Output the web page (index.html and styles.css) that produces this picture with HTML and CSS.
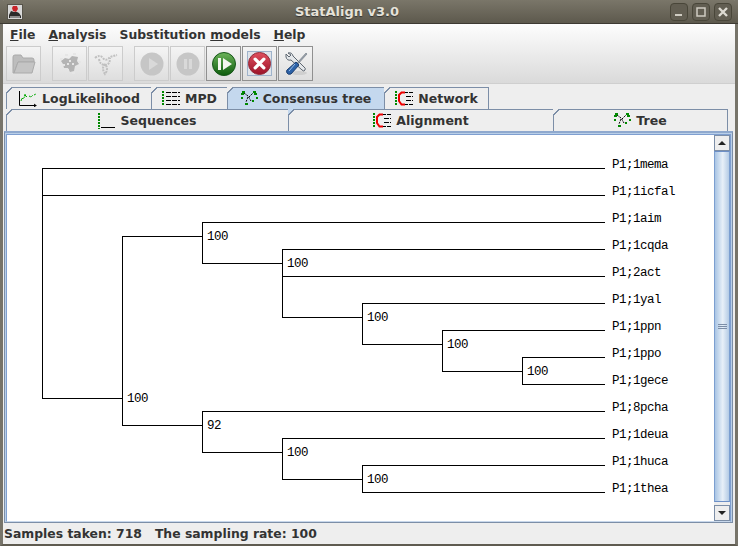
FILE: index.html
```html
<!DOCTYPE html>
<html lang="en">
<head>
<meta charset="utf-8">
<title>StatAlign v3.0</title>
<link rel="stylesheet" href="styles.css">
</head>
<body>
<div class="window">
  <header class="titlebar">
    <svg class="app-icon" width="16" height="16" viewBox="0 0 16 16">
      <rect x="0.500" y="0.500" width="15" height="15" fill="#d8d8d8" stroke="#57544a"/>
      <path d="M2 11l2-4 3 1 3 0 2 1 2 3v2H2z" fill="#2c2c2c"/>
      <path d="M6 2h4l1 3-2 3-3-1-1-3z" fill="#c8242a"/>
      <path d="M3 13h10" stroke="#eee"/>
    </svg>
    <span class="title">StatAlign v3.0</span>
    <div class="win-buttons">
      <span class="win-btn"><svg width="14" height="14" viewBox="0 0 14 14"><rect x="3" y="9" width="7" height="2" fill="#cfccc2"/></svg></span>
      <span class="win-btn"><svg width="14" height="14" viewBox="0 0 14 14"><rect x="3" y="3" width="8" height="8" fill="none" stroke="#cfccc2" stroke-width="1.500"/></svg></span>
      <span class="win-btn"><svg width="14" height="14" viewBox="0 0 14 14"><path d="M3 3l8 8M11 3l-8 8" stroke="#dedbd2" stroke-width="2.400"/></svg></span>
    </div>
  </header>
  <div class="chrome">
    <nav class="menubar">
      <span class="menu"><u>F</u>ile</span>
      <span class="menu"><u>A</u>nalysis</span>
      <span class="menu">Substitution <u>m</u>odels</span>
      <span class="menu"><u>H</u>elp</span>
    </nav>
    <div class="toolbar">
      <span class="tool disabled"><svg width="24" height="20" viewBox="0 0 24 20"><path d="M1 3q0-2 2-2h6l2 3h9q2 0 2 2v2H6L2 19H1z" fill="#bdbdbd" stroke="#aaa"/><path d="M6 8h17l-3 11H2z" fill="#c4c4c4" stroke="#aaa"/></svg></span>
      <span class="tool-gap"></span>
      <span class="tool disabled"><svg width="24" height="24" viewBox="0 0 24 24"><path d="M3 9l4-3 4 1 3-3 6 1-1 4 2 3-4 2-1 5-4 1-2-4-4 0-1-4z" fill="#b4b4b4"/><path d="M2 7h3M7 3h3M15 2h3M20 10h3M18 15h2M9 18h2M14 21h3M5 13h2M11 9h2M14 12h2M9 12h2" stroke="#e6e6e6" stroke-width="2"/></svg></span>
      <span class="tool disabled"><svg width="24" height="24" viewBox="0 0 24 24"><path d="M1 6q5-4 8 0t7-1l7-2M5 7q1 6 6 6t5-7M11 12q-4 4 0 10 4-5 0-10" fill="none" stroke="#c0c0c0" stroke-width="2" stroke-dasharray="2 1"/></svg></span>
      <span class="tool-gap"></span>
      <span class="tool disabled"><svg width="24" height="24" viewBox="0 0 24 24"><circle cx="12" cy="12" r="11.500" fill="#c6c6c6"/><path d="M9 6l9 6-9 6z" fill="#d9d9d9"/></svg></span>
      <span class="tool disabled"><svg width="24" height="24" viewBox="0 0 24 24"><circle cx="12" cy="12" r="11.500" fill="#c6c6c6"/><path d="M8 7h3v10H8zM13 7h3v10h-3z" fill="#d9d9d9"/></svg></span>
      <span class="tool"><svg width="24" height="24" viewBox="0 0 24 24"><defs><linearGradient id="g" x1="0" y1="0" x2="0" y2="1"><stop offset="0" stop-color="#6cb35a"/><stop offset="1" stop-color="#0d5c0d"/></linearGradient></defs><circle cx="12" cy="12" r="11.500" fill="url(#g)" stroke="#17571a"/><path d="M6 6h3v12H6zM11 6l9 6-9 6z" fill="#f4f7f0"/></svg></span>
      <span class="tool"><span class="tool-focus"><svg width="24" height="24" viewBox="0 0 24 24"><defs><linearGradient id="r" x1="0" y1="0" x2="0" y2="1"><stop offset="0" stop-color="#e0505f"/><stop offset="1" stop-color="#9c1228"/></linearGradient></defs><circle cx="12" cy="12" r="11.500" fill="url(#r)" stroke="#8e2b3a"/><path d="M7.500 7.500l9 9M16.500 7.500l-9 9" stroke="#fff" stroke-width="3.500" stroke-linecap="round"/></svg></span></span>
      <span class="tool"><svg width="24" height="24" viewBox="0 0 24 24"><ellipse cx="15" cy="21" rx="8" ry="2" fill="#cfcfcf"/><path d="M2 2l3 3 2-2-3-2q4-1 5 3l11 11q2 1 1 3t-3 0L7 8q-4 1-5-3z" fill="#e4e7ea" stroke="#5d6670"/><path d="M22 1l-9 10 1 1 9-10z" fill="#9aa3ad" stroke="#5d6670" stroke-width=".5"/><path d="M12 10l3 3-8 9q-3 1-4-1t0-3z" fill="#2c62a8" stroke="#1d3f70"/><path d="M11 12l-6 7" stroke="#9cc0ea"/></svg></span>
    </div>
  </div>
  <section class="tabs-area">
    <div class="tabrow tabrow-top">
      <span class="tab tab-log">
        <svg width="19" height="16" viewBox="0 0 19 16"><path d="M1.500 0v14.500h17" fill="none" stroke="#000"/><path d="M16 13l2 1.500-2 1.500" fill="none" stroke="#000"/><path d="M3 10l1-3 1 1 1-1 1-4 1 3 1-1M11 5l2 1 2-2M16 4l2-1" fill="none" stroke="#0a0" stroke-dasharray="2 .6"/></svg>
        LogLikelihood
      </span>
      <span class="tab tab-mpd">
        <svg width="18" height="15" viewBox="0 0 18 15"><path d="M1 0v15" stroke="#080" stroke-width="2" stroke-dasharray="2 1"/><path d="M4 1.500h14M4 5.500h14M4 9.500h14M4 13.500h14" stroke="#000" stroke-dasharray="5 1"/></svg>
        MPD
      </span>
      <span class="tab tab-consensus selected">
        <svg width="17" height="15" viewBox="0 0 17 15"><path d="M3 2l4 3 3 5M8 6l4-4M7 6l-2 5" fill="none" stroke="#000" stroke-dasharray="2 1"/><path d="M0 3h2v-2h2M12 1h2v2h2M0 7h2M15 7h2M4 13h3M11 10h2" fill="none" stroke="#080" stroke-width="2"/></svg>
        Consensus tree
      </span>
      <span class="tab tab-network">
        <svg width="18" height="15" viewBox="0 0 18 15"><path d="M1 0v15" stroke="#080" stroke-width="2" stroke-dasharray="2 1"/><path d="M8 1.500h10M11 5.500h7M11 9.500h7M8 13.500h10" stroke="#000" stroke-dasharray="5 1"/><path d="M10 1.500H6.500L4 4v6l2.500 3.500H10" fill="none" stroke="#e00" stroke-width="2"/></svg>
        Network
      </span>
    </div>
    <div class="tabrow tabrow-bottom">
      <span class="tab tab-seq">
        <svg width="17" height="16" viewBox="0 0 17 16"><path d="M1 0v16" stroke="#080" stroke-width="2" stroke-dasharray="2 1"/><path d="M3 14.500h14" stroke="#000"/></svg>
        Sequences
      </span>
      <span class="tab tab-align">
        <svg width="18" height="15" viewBox="0 0 18 15"><path d="M1 0v15" stroke="#080" stroke-width="2" stroke-dasharray="2 1"/><path d="M8 1.500h10M11 5.500h7M11 9.500h7M8 13.500h10" stroke="#000" stroke-dasharray="5 1"/><path d="M10 1.500H6.500L4 4v6l2.500 3.500H10" fill="none" stroke="#e00" stroke-width="2"/></svg>
        Alignment
      </span>
      <span class="tab tab-tree">
        <svg width="17" height="15" viewBox="0 0 17 15"><path d="M3 2l4 3 3 5M8 6l4-4M7 6l-2 5" fill="none" stroke="#000" stroke-dasharray="2 1"/><path d="M0 3h2v-2h2M12 1h2v2h2M0 7h2M15 7h2M4 13h3M11 10h2" fill="none" stroke="#080" stroke-width="2"/></svg>
        Tree
      </span>
    </div>
    <div class="panel">
      <div class="scrollpane">
        <svg class="tree" width="707" height="386" viewBox="7 135 707 386">
          <path class="edges" d="M42 168.500H605M42 195.500H605M42.500 168V399M42.500 398.500H122M122.500 236V426M122 236.500H202M202.500 222V264M202 222.500H605M202 263.500H282M282.500 249V318M282 249.500H605M282 276.500H605M282 317.500H362M362.500 303V345M362 303.500H605M362 344.500H442M442.500 330V372M442 330.500H605M442 371.500H522M522.500 357V385M522 357.500H605M522 384.500H605M122 425.500H202M202.500 411V453M202 411.500H605M202 452.500H282M282.500 438V480M282 438.500H605M282 479.500H362M362.500 465V493M362 465.500H605M362 492.500H605"/>
          <text x="612" y="168">P1;1mema</text><text x="612" y="195">P1;1icfal</text><text x="612" y="222">P1;1aim</text><text x="612" y="249">P1;1cqda</text><text x="612" y="276">P1;2act</text><text x="612" y="303">P1;1yal</text><text x="612" y="330">P1;1ppn</text><text x="612" y="357">P1;1ppo</text><text x="612" y="384">P1;1gece</text><text x="612" y="411">P1;8pcha</text><text x="612" y="438">P1;1deua</text><text x="612" y="465">P1;1huca</text><text x="612" y="492">P1;1thea</text>
          <text x="127" y="402">100</text><text x="207" y="240">100</text><text x="287" y="267">100</text><text x="367" y="321">100</text><text x="447" y="348">100</text><text x="527" y="375">100</text><text x="207" y="429">92</text><text x="287" y="456">100</text><text x="367" y="483">100</text>
        </svg>
        <div class="scrollbar">
          <span class="sb-btn"><i class="arrow-up"></i></span>
          <span class="sb-thumb"><i class="grip"></i></span>
          <span class="sb-btn sb-btn-down"><i class="arrow-down"></i></span>
        </div>
      </div>
    </div>
  </section>
  <footer class="status">Samples taken: 718&nbsp;&nbsp; The sampling rate: 100</footer>
</div>
</body>
</html>
```
FILE: styles.css
```css
* { box-sizing: border-box; }
html, body { margin: 0; padding: 0; }
body { width: 738px; height: 546px; overflow: hidden; background: #4c4a42; }
.window { width: 738px; height: 546px; display: flex; flex-direction: column; background: #eeeeee; border-bottom: 2px solid #5f5b50; border-left: 3px solid #77746a; border-right: 3px solid #77746a; font: bold 12.4px "DejaVu Sans", sans-serif; color: #333; }
.titlebar { height: 24px; margin: 0 -3px; padding: 0 6px 0 7px; flex: none; display: flex; align-items: center; position: relative; background: linear-gradient(#7a7669, #5d594d); border-bottom: 1px solid #3d3a33; border-radius: 4px 4px 0 0; }
.app-icon { flex: none; }
.title { position: absolute; left: 0; right: 44px; text-align: center; font-size: 13px; line-height: 24px; color: #e5e2d8; text-shadow: 0 1px 1px #333; }
.win-buttons { margin-left: auto; display: flex; gap: 4px; position: relative; }
.win-btn { width: 18px; height: 18px; border: 1px solid #494639; border-radius: 4px; background: #625e52; display: flex; align-items: center; justify-content: center; }
.chrome { height: 60px; flex: none; background: linear-gradient(#fdfdfd, #dadada); border-bottom: 1px solid #cfcfcf; display: flex; flex-direction: column; }
.menubar { height: 21px; padding: 0 0 0 7px; display: flex; gap: 13px; align-items: center; }
.toolbar { padding: 1px 0 0 3px; display: flex; }
.tool { width: 35px; height: 35px; border: 1px solid #909090; display: flex; align-items: center; justify-content: center; margin-right: 1px; background: linear-gradient(#f4f4f4, #dedede); }
.tool.disabled { border-color: #cccccc; }
.tool-gap { width: 10px; }
.tool-focus { width: 25px; height: 25px; border: 1px solid #9fb3cb; display: flex; align-items: center; justify-content: center; background: #dfe4ea; }
.tool-focus svg { width: 23px; height: 23px; }
.tabs-area { flex: 1; display: flex; flex-direction: column; padding: 3px 0 0; min-height: 0; background: #eeeeee; }
.tabrow { display: flex; flex: none; height: 22px; }
.tabrow-top { padding-left: 3px; }
.tabrow-bottom { padding-left: 3px; padding-right: 7px; }
.tab { --notch: #eeeeee; position: relative; height: 22px; display: flex; align-items: center; justify-content: center; gap: 5px; background: #eeeeee; border: 1px solid #7c8ea7; border-bottom: 0; margin-right: -1px; color: #333; white-space: nowrap; font-size: 12.500px; }
.tab::before { content: ""; position: absolute; top: -1px; left: -1px; width: 6px; height: 6px; background: linear-gradient(135deg, var(--notch) 46%, #7c8ea7 46%, #7c8ea7 60%, transparent 60%); }
.tab svg { flex: none; }
.tab-log { width: 146px; }
.tab-mpd { width: 77px; }
.tab-consensus { width: 158px; }
.tab-network { width: 105px; }
.selected { background: #c4d8ee; }
.tab-seq { width: 283px; }
.tab-align { width: 266px; --notch: #c4d8ee; }
.tab-tree { flex: 1; margin-right: 0; }
.panel { flex: 1; min-height: 0; border: 1px solid #7c8ea7; border-top: 2px solid #8fa9ce; background: #b9cfe8; padding: 1px 1px 0 1px; margin: 0 2px 0 1px; display: flex; }
.scrollpane { flex: 1; display: flex; border: 1px solid #7f9fd0; border-bottom-color: #c8d8ec; background: #fff; min-width: 0; }
.tree { display: block; flex: none; background: #fff; }
.edges { fill: none; stroke: #000; stroke-width: 1; shape-rendering: crispEdges; }
.tree text { font: 12.500px "Liberation Mono", monospace; letter-spacing: -0.5px; fill: #000; }
.scrollbar { width: 16px; flex: none; display: flex; flex-direction: column; background: #eee; }
.sb-btn { height: 16px; flex: none; display: flex; align-items: center; justify-content: center; background: #eeeeee; border: 1px solid #7c8ea7; }
.sb-btn-down { margin-top: 3px; }
.sb-thumb { flex: 1; display: flex; align-items: center; justify-content: center; background: linear-gradient(90deg, #a8c4e4, #e8f0f8 55%, #b4cbe5); border: 1px solid #7c9fd0; border-top-color: #6d8fc6; border-bottom-color: #6d8fc6; }
.grip { width: 9px; height: 5px; border-top: 1px solid #7c8ea7; border-bottom: 1px solid #7c8ea7; }
.grip::after { content: ""; display: block; margin-top: 1px; height: 1px; background: #7c8ea7; }
.arrow-up { border: 4px solid transparent; border-top: 0; border-bottom: 4px solid #222; width: 0; height: 0; }
.arrow-down { border: 4px solid transparent; border-bottom: 0; border-top: 4px solid #222; width: 0; height: 0; }
.status { height: 21px; flex: none; line-height: 20px; padding: 1px 0 0 1px; color: #333; }
```
